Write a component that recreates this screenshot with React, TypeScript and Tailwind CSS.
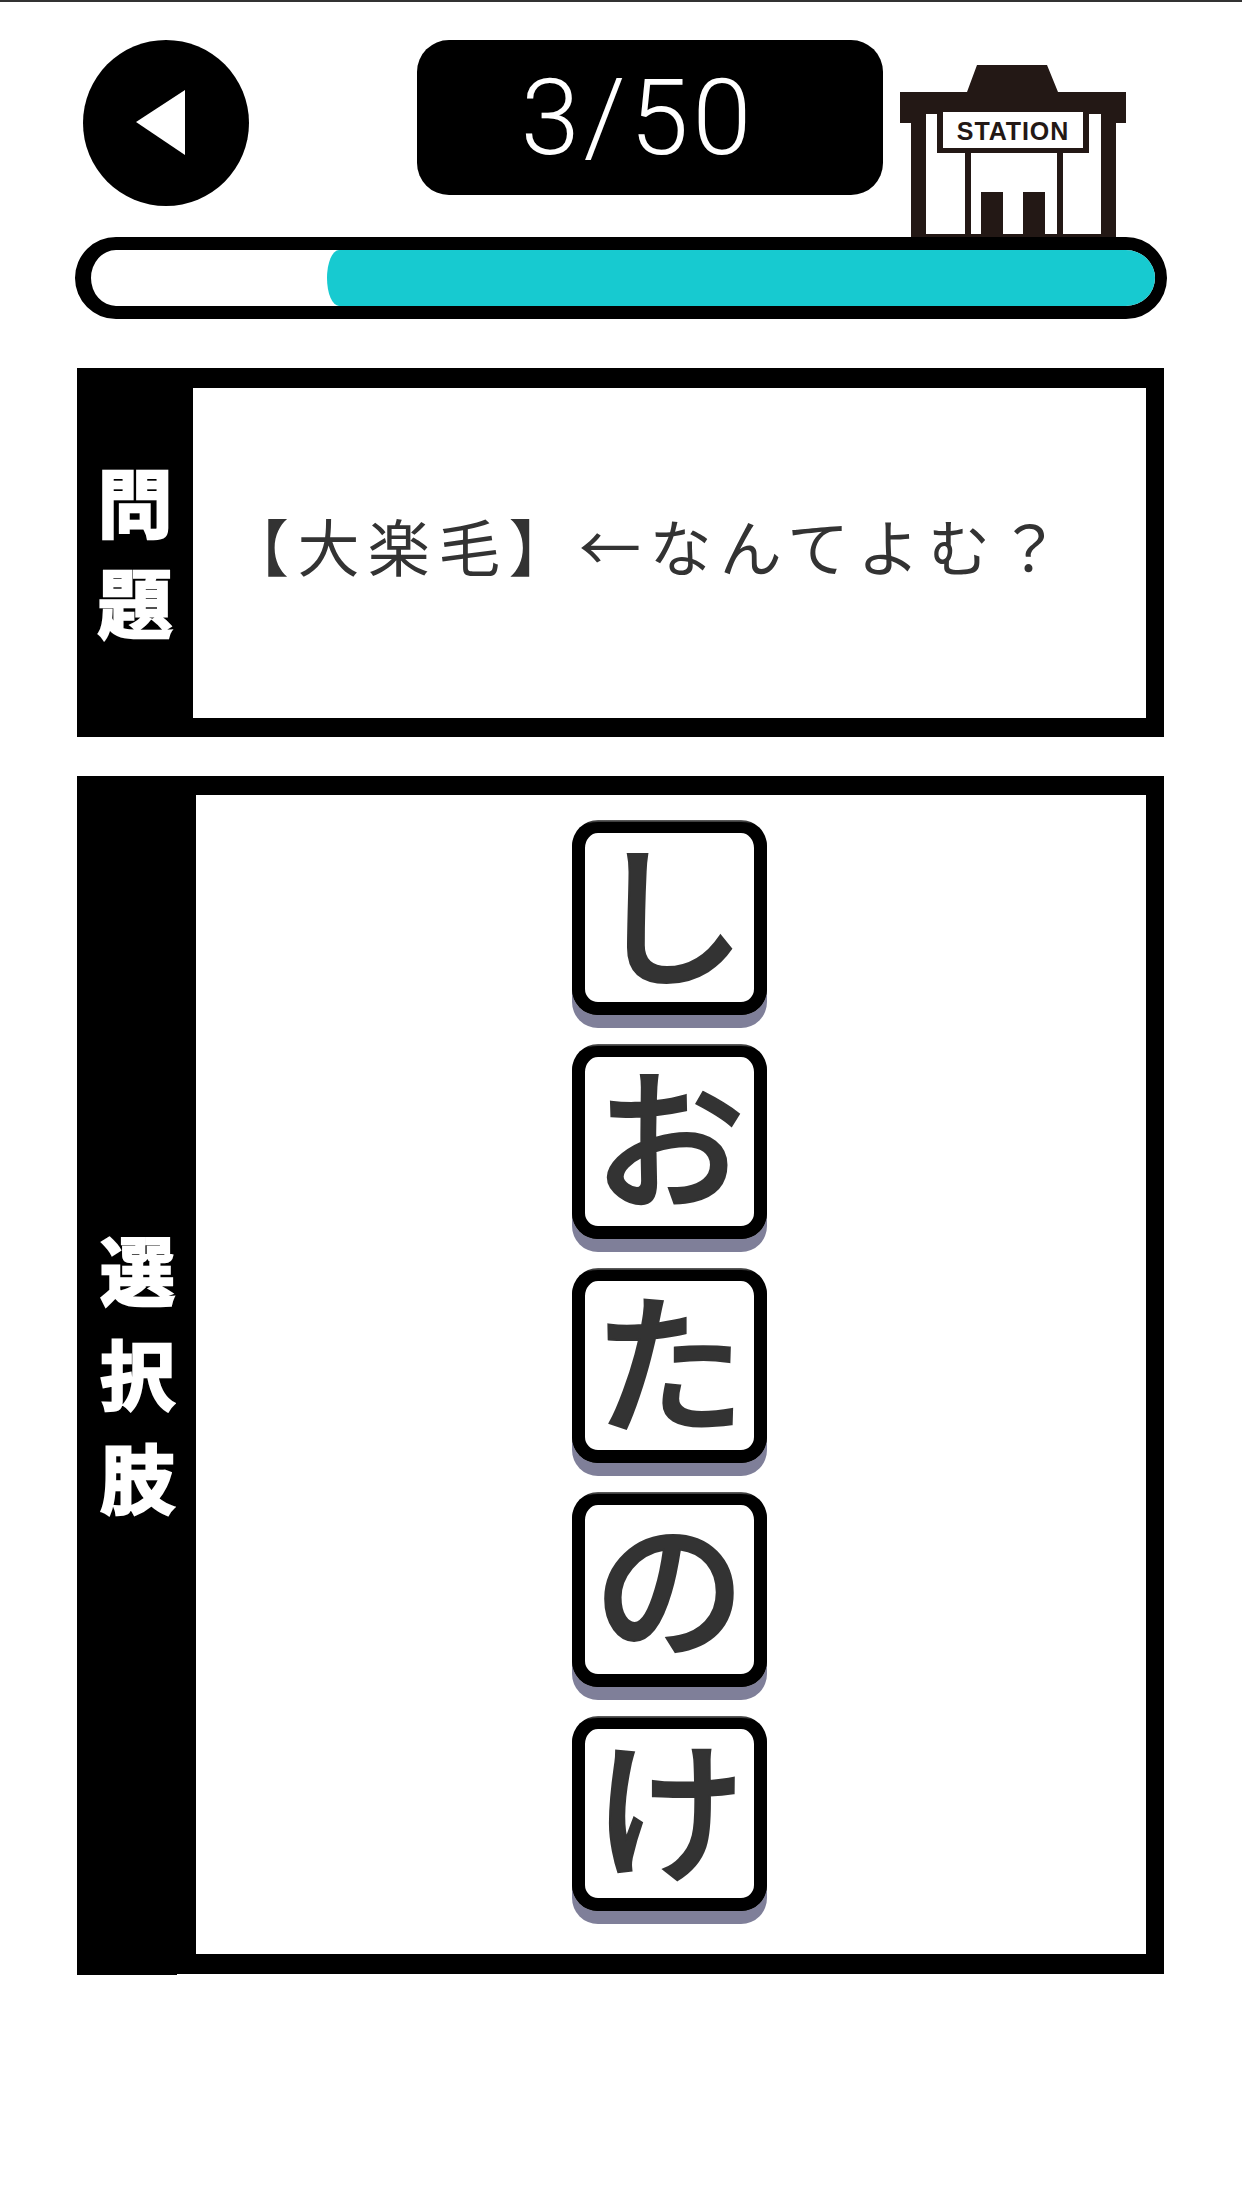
import React from 'react';

const CHOICES = ['し', 'お', 'た', 'の', 'け'];

const StationIcon = () => (
  <svg viewBox="0 0 226 172" className="w-[226px] h-[172px] mt-[25px] ml-[17px] shrink-0">
    <path d="M77 0H147L158 27H226V58H216V172H11V58H0V27H67Z" fill="#231815" />
    <rect x="26" y="49" width="175" height="120" fill="#fff" />
    <rect x="37" y="47" width="152" height="41" fill="#231815" />
    <rect x="43" y="47" width="140" height="36" fill="#fff" />
    <text
      x="113"
      y="75"
      textAnchor="middle"
      fill="#231815"
      fontSize="25"
      fontWeight="700"
      fontFamily="'Liberation Sans', sans-serif"
      letterSpacing="0.9"
    >
      STATION
    </text>
    <rect x="65" y="88" width="6" height="84" fill="#231815" />
    <rect x="157" y="88" width="6" height="84" fill="#231815" />
    <rect x="81" y="127" width="22" height="43" fill="#231815" />
    <rect x="123" y="127" width="22" height="43" fill="#231815" />
  </svg>
);

const SideLabel = ({ chars, className }: { chars: string[]; className: string }) => (
  <div className={`bg-black flex flex-col items-center justify-center shrink-0 text-white font-bold text-[75px] font-['Noto_Sans_CJK_JP',sans-serif] [-webkit-text-stroke:2.5px_white] ${className}`}>
    {chars.map((c) => (
      <span key={c}>{c}</span>
    ))}
  </div>
);

export default function App() {
  return (
    <div className="w-[1242px] h-[2208px] bg-white border-t-2 border-[#333] overflow-hidden font-['Noto_Sans_CJK_JP',sans-serif]">
      <div className="flex items-start h-[235px] pt-[38px] pl-[83px]">
        <button className="w-[166px] h-[166px] rounded-full bg-black shrink-0">
          <svg viewBox="0 0 166 166" className="w-full h-full">
            <path d="M53 82L102 50V115Z" fill="#fff" />
          </svg>
        </button>
        <div className="ml-[168px] w-[466px] h-[155px] rounded-[32px] bg-black text-white flex items-center justify-center pr-6 text-[106px] tracking-[4px] font-light font-['Roboto',sans-serif] leading-none shrink-0">
          3/50
        </div>
        <StationIcon />
      </div>

      <div className="ml-[75px] w-[1092px] h-[82px] border-y-[13px] border-l-[16px] border-r-[12px] border-black rounded-full bg-white overflow-hidden flex justify-end">
        <div className="w-[828px] h-full bg-[#17cad0] rounded-l-[12px_28px]" />
      </div>

      <div className="ml-[77px] mt-[49px] w-[1087px] h-[369px] flex">
        <SideLabel chars={['問', '題']} className="w-[116px] h-full leading-[100px] pb-[5px]" />
        <div className="flex-1 border-t-[20px] border-r-[18px] border-b-[19px] border-black flex items-center pl-[34px] pb-4">
          <span className="text-[62px] tracking-[8.4px] text-[#333] whitespace-nowrap">【大楽毛】←なんてよむ？</span>
        </div>
      </div>

      <div className="ml-[77px] mt-[39px] w-[1087px] flex items-start">
        <SideLabel chars={['選', '択', '肢']} className="w-[100px] h-[1199px] leading-[104px] pl-[21px] pb-[7px] -mr-px" />
        <div className="flex-1 h-[1198px] border-l-[20px] border-t-[19px] border-r-[18px] border-b-[20px] border-black flex flex-col items-center gap-[29px] pt-[25px] pr-[3px]">
          {CHOICES.map((c) => (
            <div
              key={c}
              className="w-[195px] h-[195px] shrink-0 rounded-[26px] bg-[linear-gradient(#666,#000_4px)] pt-[2px] shadow-[0_13px_0_#7f7f99]"
            >
              <div className="w-full h-full rounded-[26px] border-[13px] border-t-[11px] border-black bg-white flex items-center justify-center pb-5 text-[152px] font-medium leading-none text-[#333] [-webkit-text-stroke:2px_#333]">
                {c}
              </div>
            </div>
          ))}
        </div>
      </div>
    </div>
  );
}
